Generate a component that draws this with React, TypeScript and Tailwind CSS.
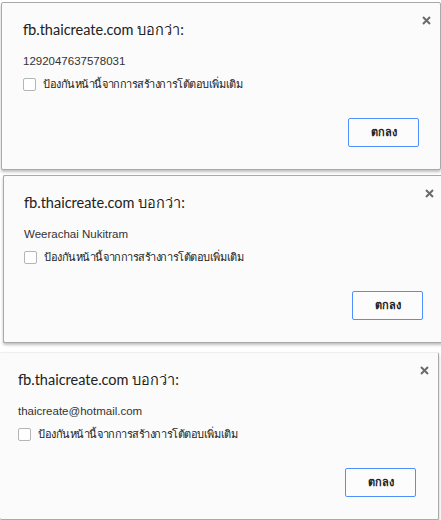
import React from "react";

type AlertProps = {
  message: string;
  className: string;
  pad: string;
};

function CloseIcon() {
  return (
    <svg width="9" height="9" viewBox="0 0 9 9" className="block">
      <path d="M1 1 L8 8 M8 1 L1 8" stroke="#6b6b6b" strokeWidth="2" />
    </svg>
  );
}

function AlertDialog({ message, className, pad }: AlertProps) {
  return (
    <div className={`relative shrink-0 h-[168px] bg-[#fbfbfb] rounded-[2px] shadow-[0_2px_3px_rgba(0,0,0,0.25)] ${className}`}>
      <div className="absolute right-[9px] top-[13px]">
        <CloseIcon />
      </div>
      <div className={`flex flex-col h-full ${pad}`}>
        <div className="font-['Lato','Open_Sans',sans-serif] text-[14.5px] leading-5 text-[#222] pt-[17px]">fb.thaicreate.com บอกว่า:</div>
        <div className="font-['Liberation_Sans',sans-serif] text-[11.5px] leading-4 text-[#333] mt-[13px]">{message}</div>
        <label className="flex items-center gap-[7px] mt-[7px] text-[11px] tracking-[-0.45px] text-[#222]">
          <span className="w-[13px] h-[13px] rounded-[2px] border border-[#b5b5b5] bg-white" />
          ป้องกันหน้านี้จากการสร้างการโต้ตอบเพิ่มเติม
        </label>
        <div className="flex justify-end mt-auto pb-[22px]">
          <button className="w-[71px] h-[29px] border border-[#4d90fe] rounded-[2px] bg-[#fcfcfc] text-[11px] font-bold text-[#222]">
            ตกลง
          </button>
        </div>
      </div>
    </div>
  );
}

export default function App() {
  return (
    <div className="w-[441px] h-[520px] overflow-hidden bg-white font-['Open_Sans','Noto_Sans',sans-serif] flex flex-col">
      <AlertDialog
        message="1292047637578031"
        className="mt-[2px] ml-[1px] w-[440px] border border-[#a9a9a9]"
        pad="pl-[21px] pr-[21px]"
      />
      <AlertDialog
        message="Weerachai Nukitram"
        className="mt-[5px] ml-[3px] w-[440px] border border-[#a9a9a9] border-r-0"
        pad="pl-[20px] pr-[20px]"
      />
      <AlertDialog
        message="thaicreate@hotmail.com"
        className="mt-[9px] ml-0 w-[439px] h-[167px] border border-[#a9a9a9] border-l-0 border-t-[#eeeeee]"
        pad="pl-[18px] pr-[22px]"
      />
    </div>
  );
}
